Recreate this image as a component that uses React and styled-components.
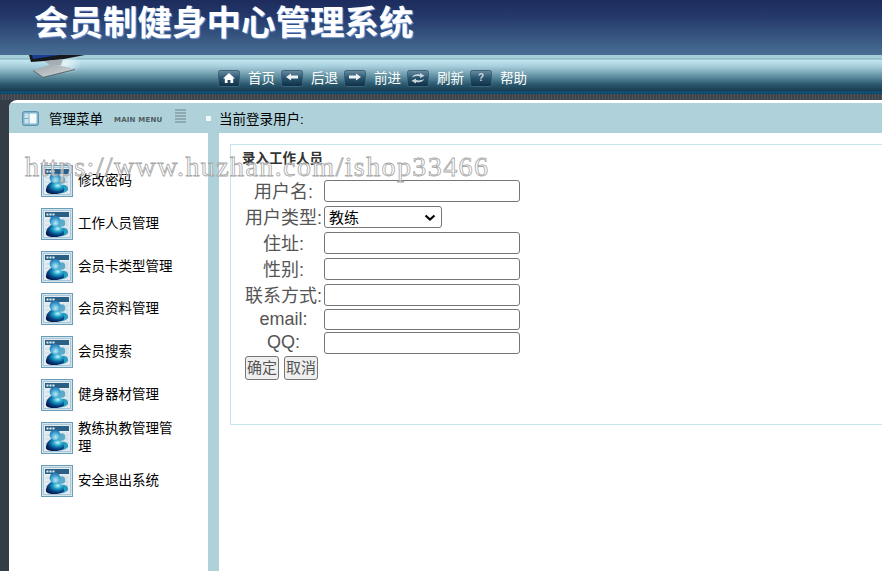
import React from "react";
import styled, { createGlobalStyle } from "styled-components";

const Global = createGlobalStyle`
  html, body { margin: 0; padding: 0; height: 100%; background: #fff; }
  #root { height: 100%; }
  * { box-sizing: border-box; }
`;

const FONT = `"Liberation Sans", "Noto Sans CJK SC", sans-serif`;

const CHEVRON =
  "data:image/svg+xml,%3Csvg xmlns='http://www.w3.org/2000/svg' width='12' height='7'%3E%3Cpath d='M1.5 1.5 L6 5.5 L10.5 1.5' fill='none' stroke='%23000' stroke-width='2.2'/%3E%3C/svg%3E";

const navItems = [
  { icon: "home", label: "首页" },
  { icon: "back", label: "后退" },
  { icon: "forward", label: "前进" },
  { icon: "refresh", label: "刷新" },
  { icon: "help", label: "帮助" },
];

const menuItems = [
  "修改密码",
  "工作人员管理",
  "会员卡类型管理",
  "会员资料管理",
  "会员搜索",
  "健身器材管理",
  "教练执教管理管理",
  "安全退出系统",
];

const formRows = [
  { label: "用户名:", h: 26 },
  { label: "用户类型:", h: 26, select: true },
  { label: "住址:", h: 26 },
  { label: "性别:", h: 26 },
  { label: "联系方式:", h: 25 },
  { label: "email:", h: 23, latin: true, short: true },
  { label: "QQ:", h: 24, latin: true },
];

const NavGlyph = ({ type }) => {
  return (
    <svg width="22" height="17" viewBox="0 0 22 17">
      <defs>
        <linearGradient id="navbtn" x1="0" y1="0" x2="0" y2="1">
          <stop offset="0" stopColor="#6c8fa3" />
          <stop offset="0.45" stopColor="#2a5670" />
          <stop offset="1" stopColor="#0e2e45" />
        </linearGradient>
      </defs>
      <rect x="0.5" y="0.5" width="21" height="16" rx="2" fill="url(#navbtn)" stroke="#3a6479" />
      {type === "home" && <path d="M11 3 L17 8.5 H15.2 V13 H12.4 V10 H9.6 V13 H6.8 V8.5 H5 Z" fill="#fff" />}
      {type === "back" && <path d="M5 7 L10 3.5 V5.5 H17 V8.5 H10 V10.5 Z" fill="#eef3f5" />}
      {type === "forward" && <path d="M17 7 L12 3.5 V5.5 H5 V8.5 H12 V10.5 Z" fill="#eef3f5" />}
      {type === "refresh" && (
        <g fill="#c9d5db">
          <path d="M5 7.5 C6 4.5 10 3.6 13 4.6 V3 L17.5 5.8 L13 8 V6.4 C10.5 5.8 8 6 5 7.5 Z" />
          <path d="M17 9 C16 12 12 12.9 9 11.9 V13.5 L4.5 10.7 L9 8.5 V10.1 C11.5 10.7 14 10.5 17 9 Z" />
        </g>
      )}
      {type === "help" && (
        <text x="11" y="11" textAnchor="middle" fontSize="10" fontWeight="700" fontFamily="Liberation Sans" fill="#c9d5db">?</text>
      )}
    </svg>
  );
};

const MenuIcon = () => (
  <svg width="32" height="32" viewBox="0 0 32 32">
    <defs>
      <radialGradient id="buddy" cx="0.65" cy="0.3" r="0.75">
        <stop offset="0" stopColor="#c4f4f8" />
        <stop offset="0.35" stopColor="#18a0c8" />
        <stop offset="0.7" stopColor="#07407f" />
        <stop offset="1" stopColor="#03184f" />
      </radialGradient>
      <radialGradient id="buddyHead" cx="0.55" cy="0.7" r="0.7">
        <stop offset="0" stopColor="#b6ecf4" />
        <stop offset="0.6" stopColor="#3f9fd0" />
        <stop offset="1" stopColor="#1c6aa4" />
      </radialGradient>
    </defs>
    <rect x="0.5" y="0.5" width="31" height="31" fill="#d5e3ea" stroke="#6a9cbb" />
    <rect x="2.5" y="2.5" width="27" height="27" fill="#e2ecf1" stroke="#a8c6d6" />
    <rect x="4" y="4" width="24" height="5" fill="#2a5f86" />
    <rect x="5.5" y="5.5" width="2" height="2" fill="#e8f2f6" />
    <rect x="8.5" y="5.5" width="2" height="2" fill="#e8f2f6" />
    <rect x="11.5" y="5.5" width="2" height="2" fill="#e8f2f6" />
    <path d="M4 13H28M4 17H28M4 21H28M4 25H28M23 10V28M26 10V28" stroke="#c9dae3" strokeWidth="1" />
    <circle cx="20.5" cy="15" r="3.8" fill="#5ea9ca" />
    <path d="M16 28 C15 19 25 17.5 27 23 C28 27 21 29 16 28 Z" fill="#2a9cc0" />
    <path d="M5 26.5 C4.5 21 8 18.5 10.5 17 H17 C20.5 18.5 23.5 22 23 26 C21 29.5 7.5 30.5 5 26.5 Z" fill="url(#buddy)" />
    <circle cx="14" cy="13" r="5.4" fill="url(#buddyHead)" />
  </svg>
);

const App = () => {
  return (
    <Page>
      <Global />
      <Header>
        <Title>会员制健身中心管理系统</Title>
      </Header>
      <NavBar>
        <Monitor>
          <svg width="56" height="24" viewBox="0 0 56 24">
            <defs>
              <linearGradient id="stand" x1="0" y1="0" x2="1" y2="1">
                <stop offset="0" stopColor="#9aa3a8" />
                <stop offset="1" stopColor="#d5dcdf" />
              </linearGradient>
              <radialGradient id="glow">
                <stop offset="0" stopColor="#eef8fc" stopOpacity="0.9" />
                <stop offset="1" stopColor="#eef8fc" stopOpacity="0" />
              </radialGradient>
            </defs>
            <ellipse cx="36" cy="9" rx="17" ry="10" fill="url(#glow)" />
            <path d="M0 0 H56 L30 5 L2 7 Z" fill="#16181c" />
            <path d="M3 0 H31 L4 4 Z" fill="#1b3c94" />
            <path d="M15 6 L34 4 L32 10 L22 11 Z" fill="#a3adb3" />
            <path d="M4 15 L24 9 L46 14 L14 22 Z" fill="url(#stand)" />
            <path d="M4 15 L14 22 L46 14 L46 15 L14 23 L4 16 Z" fill="#5d686e" />
          </svg>
        </Monitor>
        <NavList>
          {navItems.map((item) => (
            <NavItem key={item.icon}>
              <NavGlyph type={item.icon} />
              <NavLabel>{item.label}</NavLabel>
            </NavItem>
          ))}
        </NavList>
      </NavBar>
      <Stripe />
      <Body>
        <Panel>
          <TitleBar>
            <MenuHead>
              <svg width="17" height="15" viewBox="0 0 17 15">
                <rect x="0.5" y="0.5" width="16" height="14" rx="2" fill="#7fb5cc" stroke="#5b93ae" />
                <rect x="2.5" y="2.5" width="4" height="10" fill="#cfe4ec" />
                <rect x="7.5" y="2.5" width="7" height="10" fill="#f4fafc" />
                <path d="M2.5 7.5H6.5" stroke="#6fa9c4" />
              </svg>
              <MenuName>管理菜单</MenuName>
              <MenuEn>MAIN MENU</MenuEn>
              <MenuLines>
                <i /><i /><i /><i /><i />
              </MenuLines>
            </MenuHead>
            <UserDot />
            <UserText>当前登录用户:</UserText>
          </TitleBar>
          <Columns>
            <Sidebar>
              {menuItems.map((name) => (
                <MenuRow key={name}>
                  <MenuIcon />
                  <MenuText>{name}</MenuText>
                </MenuRow>
              ))}
            </Sidebar>
            <Divider />
            <Content>
              <FormBox>
                <FormTitle>录入工作人员</FormTitle>
                {formRows.map((row) => (
                  <FormRow key={row.label} $h={row.h}>
                    <FieldLabel $latin={row.latin}>{row.label}</FieldLabel>
                    {row.select ? (
                      <Select defaultValue="教练">
                        <option>教练</option>
                      </Select>
                    ) : (
                      <Input type="text" $short={row.short} />
                    )}
                  </FormRow>
                ))}
                <Buttons>
                  <Button type="button">确定</Button>
                  <Button type="button">取消</Button>
                </Buttons>
              </FormBox>
            </Content>
          </Columns>
        </Panel>
      </Body>
      <Watermark>https://www.huzhan.com/ishop33466</Watermark>
    </Page>
  );
};

const Page = styled.div`
  position: relative;
  width: 100%;
  height: 100vh;
  overflow: hidden;
  display: flex;
  flex-direction: column;
  font-family: ${FONT};
`;
const Header = styled.div`
  height: 55px;
  flex: none;
  padding-left: 34px;
  background: linear-gradient(#1c2c5c, #24396a 30%, #486e94);
`;
const Title = styled.h1`
  margin: 0;
  font-size: 34.5px;
  line-height: 46px;
  font-weight: 700;
  white-space: nowrap;
  color: #fff;
  text-shadow: 1px 1px 1px #7f9fd8;
`;
const NavBar = styled.div`
  position: relative;
  height: 39px;
  flex: none;
  padding: 15px 0 0 218px;
  background: linear-gradient(
    #a6cfdb 0,
    #a6cfdb 3px,
    #7fa9b8 4px,
    #c3e7f2 5px,
    #a2cbd8 12px,
    #5d8c9e 22px,
    #2c5a70 29px,
    #173b50 36px,
    #0a5c88 37px,
    #0b3f5e 39px
  );
`;
const Monitor = styled.div`
  position: absolute;
  left: 29px;
  top: 0;
  display: flex;
`;
const NavList = styled.div`
  display: flex;
`;
const NavItem = styled.div`
  display: flex;
  align-items: center;
  width: 63px;
  height: 17px;
  gap: 8px;
`;
const NavLabel = styled.span`
  font-size: 13.5px;
  line-height: 17px;
  color: #fff;
`;
const Stripe = styled.div`
  height: 6px;
  flex: none;
  background: repeating-linear-gradient(90deg, #3d444b 0 2px, #4c535a 2px 3px);
`;
const Body = styled.div`
  flex: 1;
  display: flex;
  padding-left: 9px;
  background: #343d45;
  min-height: 0;
`;
const Panel = styled.div`
  flex: 1;
  display: flex;
  flex-direction: column;
  min-width: 0;
  background: #fff;
  padding-top: 3px;
  border-top-left-radius: 8px;
  overflow: hidden;
`;
const TitleBar = styled.div`
  height: 30px;
  flex: none;
  display: flex;
  align-items: center;
  background: #aed1da;
`;
const MenuHead = styled.div`
  width: 197px;
  flex: none;
  display: flex;
  align-items: center;
  padding-left: 13px;
`;
const MenuName = styled.span`
  margin-left: 10px;
  font-size: 13.5px;
  color: #000;
`;
const MenuEn = styled.span`
  margin: 4px 0 0 11px;
  width: 49px;
  font-family: "DejaVu Sans", sans-serif;
  font-size: 7px;
  line-height: 8px;
  font-weight: 700;
  letter-spacing: 0.2px;
  white-space: nowrap;
  color: #4f5b60;
`;
const MenuLines = styled.span`
  margin: 0 0 4px 12px;
  display: flex;
  flex-direction: column;
  gap: 1px;
  i {
    display: block;
    width: 11px;
    height: 2px;
    background: #8ea9b1;
  }
`;
const UserDot = styled.span`
  width: 5px;
  height: 5px;
  background: #f2f8fa;
`;
const UserText = styled.span`
  margin-left: 8px;
  font-size: 13.5px;
  color: #000;
`;
const Columns = styled.div`
  flex: 1;
  display: flex;
  min-height: 0;
`;
const Sidebar = styled.div`
  width: 199px;
  flex: none;
  padding: 32px 0 0 32px;
  background: #fff;
`;
const MenuRow = styled.div`
  display: flex;
  align-items: center;
  gap: 5px;
  width: 135px;
  height: 32px;
  margin-bottom: 10.8px;
`;
const MenuText = styled.span`
  flex: 1;
  font-size: 13.5px;
  line-height: 18px;
  color: #000;
`;
const Divider = styled.div`
  width: 11px;
  flex: none;
  background: #aed1da;
`;
const Content = styled.div`
  flex: 1;
  min-width: 0;
  padding: 11px 0 0 11px;
`;
const FormBox = styled.div`
  width: 700px;
  height: 281px;
  padding: 6px 0 0 14px;
  border: 1px solid #c5e6ec;
`;
const FormTitle = styled.div`
  height: 29px;
  margin-left: -3px;
  font-size: 13.5px;
  line-height: 16px;
  font-weight: 700;
  color: #333;
`;
const FormRow = styled.div`
  display: flex;
  align-items: flex-start;
  height: ${(props) => props.$h}px;
`;
const FieldLabel = styled.label`
  width: 79px;
  flex: none;
  text-align: center;
  padding-right: 2px;
  font-size: 18px;
  line-height: ${(props) => (props.$latin ? 20 : 24)}px;
  color: #555;
  white-space: nowrap;
`;
const Input = styled.input`
  width: 196px;
  height: ${(props) => (props.$short ? 21 : 22)}px;
  padding: 1px 2px;
  border: 1px solid #767676;
  border-radius: 3px;
  background: #fff;
`;
const Select = styled.select`
  appearance: none;
  width: 118px;
  height: 22px;
  padding: 0 0 0 4px;
  font-family: ${FONT};
  font-size: 15px;
  color: #000;
  background: #fff url("${CHEVRON}") no-repeat right 5px center;
  border: 1px solid #767676;
  border-radius: 3px;
`;
const Buttons = styled.div`
  display: flex;
  gap: 5px;
`;
const Button = styled.button`
  height: 24px;
  padding: 0 1px;
  width: 34px;
  font-family: ${FONT};
  font-size: 15px;
  line-height: 20px;
  color: #555;
  background: #efefef;
  border: 1px solid #767676;
  border-radius: 3px;
`;
const Watermark = styled.div`
  position: absolute;
  left: 25px;
  top: 149px;
  font-family: "Liberation Serif", serif;
  font-size: 28px;
  line-height: 36px;
  letter-spacing: 1.4px;
  white-space: nowrap;
  color: rgba(255, 255, 255, 0.55);
  -webkit-text-stroke: 0.8px #a6a6a6;
  pointer-events: none;
`;

export default App;
